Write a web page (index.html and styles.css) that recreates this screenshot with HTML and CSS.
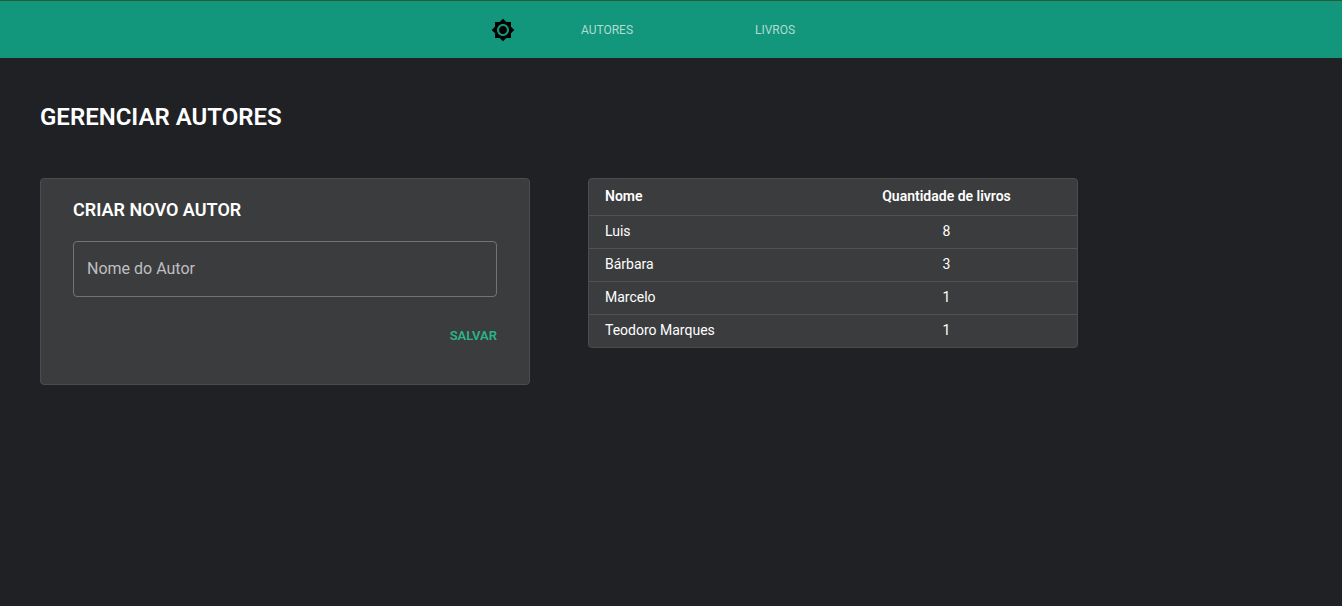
FILE: index.html
```
<!DOCTYPE html>
<html lang="pt-BR">
<head>
<meta charset="utf-8">
<meta name="viewport" content="width=device-width, initial-scale=1">
<title>Gerenciar autores</title>
<link rel="stylesheet" href="styles.css">
</head>
<body>
<header class="topbar">
  <button class="theme-toggle" type="button" aria-label="Alternar tema">
    <svg class="theme-icon" viewBox="0 0 24 24" aria-hidden="true"><path d="M20 8.69V4h-4.69L12 .69 8.69 4H4v4.69L.69 12 4 15.31V20h4.69L12 23.31 15.31 20H20v-4.69L23.31 12 20 8.69zM12 18c-3.31 0-6-2.69-6-6s2.69-6 6-6 6 2.69 6 6-2.69 6-6 6zm0-10c-2.21 0-4 1.79-4 4s1.79 4 4 4 4-1.79 4-4-1.79-4-4-4z"/></svg>
  </button>
  <nav class="tabs">
    <a class="tab" href="#autores">AUTORES</a>
    <a class="tab" href="#livros">LIVROS</a>
  </nav>
</header>
<main class="page">
  <h1 class="page-title">GERENCIAR AUTORES</h1>
  <div class="columns">
    <form class="card author-form">
      <h2 class="card-title">CRIAR NOVO AUTOR</h2>
      <input class="text-field" type="text" name="nome" placeholder="Nome do Autor" aria-label="Nome do Autor">
      <button class="save-button" type="button">SALVAR</button>
    </form>
    <div class="card">
      <table class="authors">
        <thead>
          <tr><th class="name" scope="col">Nome</th><th class="count" scope="col">Quantidade de livros</th></tr>
        </thead>
        <tbody>
          <tr><td class="name">Luis</td><td class="count">8</td></tr>
          <tr><td class="name">Bárbara</td><td class="count">3</td></tr>
          <tr><td class="name">Marcelo</td><td class="count">1</td></tr>
          <tr><td class="name">Teodoro Marques</td><td class="count">1</td></tr>
        </tbody>
      </table>
    </div>
  </div>
</main>
</body>
</html>
```

FILE: styles.css
```
* {
  box-sizing: border-box;
}

body {
  margin: 0;
  min-height: 100vh;
  background: #202124;
  color: #fff;
  font-family: Roboto, "Liberation Sans", sans-serif;
  font-size: 14px;
}

.topbar {
  display: flex;
  justify-content: center;
  align-items: center;
  height: 58px;
  padding-top: 1px;
  border-top: 1px solid #2b5b33;
  background: #12967c;
}

.theme-toggle {
  display: flex;
  padding: 8px;
  border: 0;
  background: none;
  color: #000;
  cursor: pointer;
}

.theme-icon {
  width: 24px;
  height: 24px;
  fill: currentColor;
}

.tabs {
  display: flex;
}

.tab {
  width: 168px;
  color: #b0dcd2;
  font-size: 12px;
  line-height: 16px;
  text-align: center;
  text-decoration: none;
}

.page {
  padding: 40px;
}

.page-title {
  margin: 0 0 42px;
  font-size: 24px;
  font-weight: 600;
  line-height: 38px;
}

.columns {
  display: grid;
  grid-template-columns: repeat(2, minmax(0, 490px));
  align-items: start;
  gap: 58px;
}

.card {
  overflow: hidden;
  border: 1px solid #4b4c4e;
  border-radius: 4px;
  background: #3b3c3e;
}

.author-form {
  display: flex;
  flex-direction: column;
  padding: 16px 32px 32px;
}

.card-title {
  margin: 0 0 16px;
  font-size: 18px;
  font-weight: 600;
  line-height: 30px;
}

.text-field {
  height: 56px;
  padding: 0 13px 2px;
  border: 1px solid #727375;
  border-radius: 4px;
  background: transparent;
  color: #fff;
  font: inherit;
  font-size: 16px;
}

.text-field::placeholder {
  color: #bfbfc0;
  opacity: 1;
}

.save-button {
  align-self: flex-end;
  height: 32px;
  margin: 22px 0 1px;
  padding: 0;
  border: 0;
  background: none;
  color: #2bb38a;
  font-family: inherit;
  font-size: 13px;
  font-weight: 600;
  cursor: pointer;
}

.authors {
  width: 100%;
  border-collapse: separate;
  border-spacing: 0;
  line-height: 20px;
}

.authors th {
  height: 36px;
  padding: 0 16px 2px;
  font-weight: 600;
}

.authors td {
  height: 33px;
  padding: 0 16px 2px;
  border-top: 1px solid #515254;
}

.authors .name {
  text-align: left;
}

.authors .count {
  width: 261px;
  text-align: center;
}
```
